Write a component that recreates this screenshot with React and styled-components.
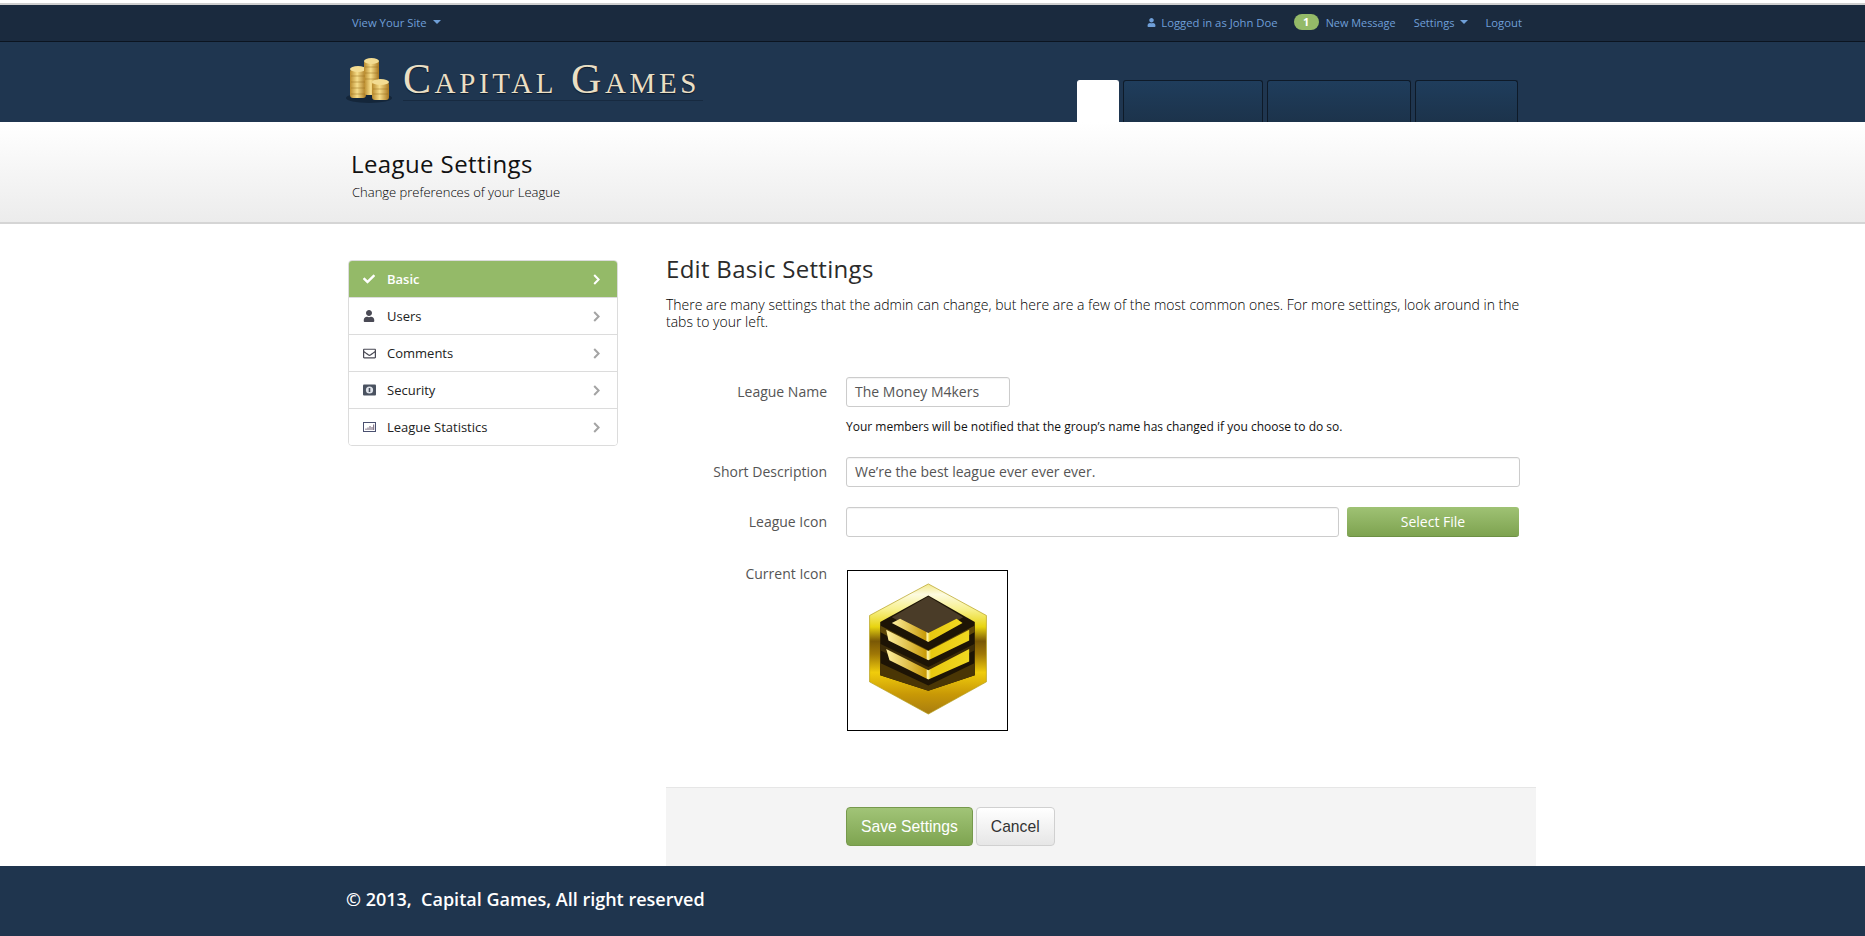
import React from 'react';
import styled, { createGlobalStyle } from 'styled-components';
import { FaCheck, FaUser, FaRegEnvelope } from 'react-icons/fa';

const GlobalStyle = createGlobalStyle`
  html, body { margin: 0; padding: 0; background: #fff; }
  body { font-family: "Open Sans", "Liberation Sans", sans-serif; color: #333; }
  * { box-sizing: border-box; }
`;

const Page = styled.div`
  width: 100%;
  height: 936px;
  display: flex;
  flex-direction: column;
  overflow: hidden;
  padding-top: 3px;
`;

const Wrap = styled.div`
  width: 1188px;
  margin-left: 348px;
`;

const TopBar = styled.div`
  height: 39px;
  background: #1a2a3e;
  border-top: 2px solid #cfcfcf;
  border-bottom: 1px solid #0b1420;
  flex-shrink: 0;
`;

const TopInner = styled(Wrap)`
  height: 100%;
  display: flex;
  align-items: center;
  justify-content: space-between;
  padding: 0 14px 2px 4px;
  font-size: 11.3px;
  color: #6f9fd8;
`;

const TopGroup = styled.div`
  display: flex;
  align-items: center;
`;

const TopLink = styled.span`
  display: inline-flex;
  align-items: center;
  margin-left: ${(p) => p.$gap || 0}px;
  font-size: ${(p) => p.$size || 11.3}px;
`;

const UserGlyph = styled(FaUser)`
  font-size: 9px;
  margin-right: 5px;
`;

const Caret = styled.i`
  display: inline-block;
  width: 0;
  height: 0;
  margin-left: 6px;
  border-left: 4px solid transparent;
  border-right: 4px solid transparent;
  border-top: 4px solid #6f9fd8;
`;

const Badge = styled.span`
  width: 25px;
  height: 16px;
  border-radius: 8px;
  background: #94ba68;
  color: #fff;
  font-weight: 700;
  font-size: 11px;
  line-height: 16px;
  text-align: center;
  margin-left: 16px;
  margin-right: 7px;
`;

const Header = styled.div`
  height: 80px;
  background: #1f3650;
  flex-shrink: 0;
`;

const HeaderInner = styled(Wrap)`
  height: 100%;
  display: flex;
  justify-content: space-between;
  padding-right: 18px;
`;

const Logo = styled.div`
  display: flex;
  align-items: flex-start;
  margin-left: -2px;
  padding-top: 16px;
`;

const LogoName = styled.div`
  font-family: "Liberation Serif", serif;
  font-variant: small-caps;
  font-size: 42px;
  line-height: 42px;
  letter-spacing: 3.6px;
  color: #eadfc4;
  width: 300px;
  height: 43px;
  margin-left: 11px;
  white-space: nowrap;
  border-bottom: 1px solid #172a40;
  text-shadow: 0 1px 1px #0d1a28;
`;

const Tabs = styled.div`
  display: flex;
  align-items: flex-end;
  gap: 4px;
`;

const Tab = styled.div`
  width: ${(p) => p.$w}px;
  height: 42px;
  border-radius: 3px 3px 0 0;
  border: 1px solid ${(p) => (p.$active ? '#fff' : '#0e1a28')};
  border-bottom: none;
  background: ${(p) => (p.$active ? '#fff' : 'linear-gradient(#1f3d5c, #1c334b)')};
`;

const SubHeader = styled.div`
  height: 102px;
  flex-shrink: 0;
  background: linear-gradient(#fff, #ececec);
  border-bottom: 2px solid #d5d5d5;
`;

const SubInner = styled(Wrap)`
  padding: 26px 0 0 3px;
`;

const PageTitle = styled.h1`
  margin: 0;
  font-size: 24px;
  line-height: 31px;
  font-weight: 500;
  letter-spacing: 0.4px;
  color: #111;
`;

const PageSub = styled.p`
  margin: 4px 0 0 1px;
  font-size: 13px;
  line-height: 18px;
  font-weight: 300;
  color: #000;
`;

const Body = styled(Wrap)`
  flex: 1;
  display: flex;
  min-height: 0;
`;

const Side = styled.ul`
  list-style: none;
  margin: 36px 0 0;
  padding: 0;
  width: 270px;
  height: 186px;
  border: 1px solid #dcdcdc;
  border-radius: 4px;
  overflow: hidden;
  flex-shrink: 0;
`;

const SideItem = styled.li`
  height: 37px;
  display: flex;
  align-items: center;
  padding: 0 17px 0 14px;
  font-size: 13px;
  color: ${(p) => (p.$active ? '#fff' : '#222')};
  background: ${(p) => (p.$active ? '#94ba68' : '#fff')};
  font-weight: ${(p) => (p.$active ? 600 : 400)};
  border-bottom: 1px solid #dcdcdc;
  &:last-child { border-bottom: none; height: 36px; }
`;

const SideIcon = styled.span`
  width: 22px;
  margin-right: 2px;
  display: flex;
  align-items: center;
  color: ${(p) => (p.$active ? '#fff' : '#4a4a55')};
  font-size: 12px;
`;

const SideLabel = styled.span`
  flex: 1;
`;

const Chevron = ({ active }) => (
  <svg width="7" height="11" viewBox="0 0 7 11">
    <path d="M1.2 1L5.6 5.5L1.2 10" fill="none" stroke={active ? '#fff' : '#a4a4a4'} strokeWidth="2" />
  </svg>
);

const Main = styled.div`
  width: 870px;
  margin-left: 48px;
  display: flex;
  flex-direction: column;
`;

const Heading = styled.h2`
  margin: 29px 0 0;
  font-size: 24px;
  line-height: 32px;
  font-weight: 500;
  letter-spacing: 0.3px;
  color: #2b2b2b;
`;

const Intro = styled.p`
  margin: 11px 0 0;
  width: 858px;
  font-size: 14px;
  line-height: 17px;
  font-weight: 300;
  color: #000;
`;

const Form = styled.div`
  padding-top: 47px;
  flex: 1;
`;

const Row = styled.div`
  display: grid;
  grid-template-columns: 161px 1fr;
  column-gap: 19px;
  align-items: ${(p) => (p.$top ? 'start' : 'center')};
  margin-top: ${(p) => p.$mt || 0}px;
`;

const Label = styled.label`
  text-align: right;
  font-size: 14px;
  color: #555;
  margin-top: ${(p) => (p.$top ? -6 : -2)}px;
`;

const Field = styled.div`
  height: 30px;
  width: ${(p) => (p.$w ? `${p.$w}px` : '100%')};
  border: 1px solid #ccc;
  border-radius: 3px;
  background: #fff;
  padding: 0 8px;
  font-size: 14px;
  line-height: 28px;
  color: #555;
  box-shadow: inset 0 1px 1px rgba(0, 0, 0, 0.05);
`;

const Help = styled.div`
  font-size: 12px;
  line-height: 16px;
  margin: 12px 0 0;
  color: #111;
`;

const FileRow = styled.div`
  display: flex;
  gap: 8px;
  width: 673px;
`;

const SelectFile = styled.div`
  width: 172px;
  height: 30px;
  flex-shrink: 0;
  border-radius: 3px;
  background: linear-gradient(#9fc274, #7ea350);
  border-bottom: 1px solid #6d9044;
  color: #fff;
  font-size: 14px;
  line-height: 30px;
  text-align: center;
`;

const IconBox = styled.div`
  width: 161px;
  height: 161px;
  border: 1px solid #000;
  margin-left: 1px;
`;

const Actions = styled.div`
  height: 79px;
  flex-shrink: 0;
  background: #f4f4f4;
  border-top: 1px solid #e6e6e6;
  display: flex;
  align-items: flex-start;
  gap: 3px;
  padding: 19px 0 0 180px;
`;

const Button = styled.div`
  height: 39px;
  padding: 0 ${(p) => (p.$primary ? 14 : 14)}px;
  border-radius: 4px;
  font-family: "Liberation Sans", Arial, sans-serif;
  font-size: 15.7px;
  line-height: 37px;
  border: 1px solid ${(p) => (p.$primary ? '#76994c' : '#d0d0d0')};
  color: ${(p) => (p.$primary ? '#fff' : '#333')};
  background: ${(p) => (p.$primary ? 'linear-gradient(#a1c477, #7ea450)' : 'linear-gradient(#fff, #e6e6e6)')};
`;

const Footer = styled.div`
  height: 70px;
  flex-shrink: 0;
  background: #1f354e;
  color: #fff;
`;

const FooterText = styled(Wrap)`
  margin-left: 346px;
  font-size: 18px;
  font-weight: 600;
  line-height: 66px;
  white-space: pre;
`;

const Coins = () => (
  <svg width="46" height="46" viewBox="0 0 46 46">
    <defs>
      <linearGradient id="coin" x1="0" x2="1" y1="0" y2="0">
        <stop offset="0" stopColor="#b98a2c" />
        <stop offset="0.45" stopColor="#f6dd8a" />
        <stop offset="1" stopColor="#a9771f" />
      </linearGradient>
    </defs>
    <ellipse cx="23" cy="40" rx="23" ry="5" fill="#14263a" />
    <rect x="4" y="11" width="16" height="29" rx="3" fill="url(#coin)" />
    <ellipse cx="12" cy="11" rx="8" ry="3" fill="#f3dc92" />
    <rect x="18" y="2" width="15" height="35" rx="3" fill="url(#coin)" />
    <ellipse cx="25.5" cy="3" rx="7.5" ry="3" fill="#f3dc92" />
    <rect x="26" y="24" width="17" height="18" rx="3" fill="url(#coin)" />
    <ellipse cx="34.5" cy="24" rx="8.5" ry="3" fill="#f3dc92" />
    <path d="M5 18h14M5 24h14M5 30h14M5 36h14M19 9h13M19 15h13M19 21h13M27 31h15M27 36h15" stroke="#9a6f1e" strokeWidth="0.8" opacity="0.6" />
  </svg>
);

const ShieldIcon = () => (
  <svg width="13" height="12" viewBox="0 0 13 12">
    <rect width="13" height="11" y="0.5" rx="1" fill="#4a5260" />
    <circle cx="6.5" cy="6" r="3.6" fill="#dfe3ea" />
    <rect x="5.7" y="4" width="1.6" height="4" fill="#4a5260" />
  </svg>
);

const StatsIcon = () => (
  <svg width="13" height="12" viewBox="0 0 13 12">
    <rect x="0.5" y="1.5" width="12" height="9" fill="#fff" stroke="#4a5070" />
    <path d="M3 9V7.5M5 9V6.5M7 9V5M9 9V6M10.7 9V3.5" stroke="#6a5a70" strokeWidth="1" />
  </svg>
);

const Badge3D = () => (
  <svg width="159" height="159" viewBox="23 31 479 479">
    <defs>
      <linearGradient id="rim" x1="0" x2="0" y1="0" y2="1">
        <stop offset="0" stopColor="#f2e88a" />
        <stop offset="0.08" stopColor="#fdfbe0" />
        <stop offset="0.2" stopColor="#f7f08a" />
        <stop offset="0.33" stopColor="#e8d410" />
        <stop offset="0.44" stopColor="#7a5806" />
        <stop offset="0.54" stopColor="#a07806" />
        <stop offset="0.68" stopColor="#f0cc0c" />
        <stop offset="0.85" stopColor="#c89806" />
        <stop offset="1" stopColor="#a87d10" />
      </linearGradient>
      <linearGradient id="stripe" x1="0" x2="1" y1="0" y2="0">
        <stop offset="0" stopColor="#fff0a0" />
        <stop offset="0.48" stopColor="#c89a08" />
        <stop offset="0.5" stopColor="#fff6b0" />
        <stop offset="0.54" stopColor="#e8c810" />
        <stop offset="1" stopColor="#f0d820" />
      </linearGradient>
    </defs>
    <path d="M265 70L440 165V365L265 462L88 365V165Z" fill="url(#rim)" stroke="#b09a10" strokeWidth="2" />
    <path d="M265 105L405 185V345L265 392L120 345V185Z" fill="#1d1405" />
    <path d="M265 108L370 170L265 228L155 170Z" fill="#4a3c28" />
    <path d="M120 195L265 270L405 195V215L265 295L120 215Z" fill="#5d4708" />
    <path d="M180 175L265 218L350 175L368 188L265 245L155 188Z" fill="url(#stripe)" />
    <path d="M138 208L265 272L388 208V240L265 300L145 240Z" fill="url(#stripe)" />
    <path d="M120 250L265 320L405 250V270L265 340L120 270Z" fill="#3c2c08" />
    <path d="M138 266L265 330L388 266V304L265 358L148 300Z" fill="url(#stripe)" />
    <path d="M120 308L265 376L405 308V345L265 392L120 345Z" fill="#4a3605" />
  </svg>
);

const sideItems = [
  { label: 'Basic', icon: <FaCheck />, active: true },
  { label: 'Users', icon: <FaUser /> },
  { label: 'Comments', icon: <FaRegEnvelope size={13} /> },
  { label: 'Security', icon: <ShieldIcon /> },
  { label: 'League Statistics', icon: <StatsIcon /> },
];

export default function App() {
  return (
    <Page>
      <GlobalStyle />
      <TopBar>
        <TopInner>
          <TopGroup>
            <TopLink>View Your Site<Caret /></TopLink>
          </TopGroup>
          <TopGroup>
            <UserGlyph />
            <TopLink>Logged in as John Doe</TopLink>
            <Badge>1</Badge>
            <TopLink $size={10.9}>New Message</TopLink>
            <TopLink $gap={18} $size={11}>Settings<Caret /></TopLink>
            <TopLink $gap={17}>Logout</TopLink>
          </TopGroup>
        </TopInner>
      </TopBar>
      <Header>
        <HeaderInner>
          <Logo>
            <Coins />
            <LogoName>Capital Games</LogoName>
          </Logo>
          <Tabs>
            <Tab $w={42} $active />
            <Tab $w={140} />
            <Tab $w={144} />
            <Tab $w={103} />
          </Tabs>
        </HeaderInner>
      </Header>
      <SubHeader>
        <SubInner>
          <PageTitle>League Settings</PageTitle>
          <PageSub>Change preferences of your League</PageSub>
        </SubInner>
      </SubHeader>
      <Body>
        <Side>
          {sideItems.map((item) => (
            <SideItem key={item.label} $active={item.active}>
              <SideIcon $active={item.active}>{item.icon}</SideIcon>
              <SideLabel>{item.label}</SideLabel>
              <Chevron active={item.active} />
            </SideItem>
          ))}
        </Side>
        <Main>
          <Heading>Edit Basic Settings</Heading>
          <Intro>
            There are many settings that the admin can change, but here are a few of the most common ones. For more settings, look around in the tabs to your left.
          </Intro>
          <Form>
            <Row>
              <Label>League Name</Label>
              <Field $w={164}>The Money M4kers</Field>
            </Row>
            <Row>
              <span />
              <Help>Your members will be notified that the group’s name has changed if you choose to do so.</Help>
            </Row>
            <Row $mt={22}>
              <Label>Short Description</Label>
              <Field $w={674}>We’re the best league ever ever ever.</Field>
            </Row>
            <Row $mt={20}>
              <Label>League Icon</Label>
              <FileRow>
                <Field />
                <SelectFile>Select File</SelectFile>
              </FileRow>
            </Row>
            <Row $mt={33} $top>
              <Label $top>Current Icon</Label>
              <IconBox><Badge3D /></IconBox>
            </Row>
          </Form>
          <Actions>
            <Button $primary>Save Settings</Button>
            <Button>Cancel</Button>
          </Actions>
        </Main>
      </Body>
      <Footer>
        <FooterText>© 2013,  Capital Games, All right reserved</FooterText>
      </Footer>
    </Page>
  );
}
